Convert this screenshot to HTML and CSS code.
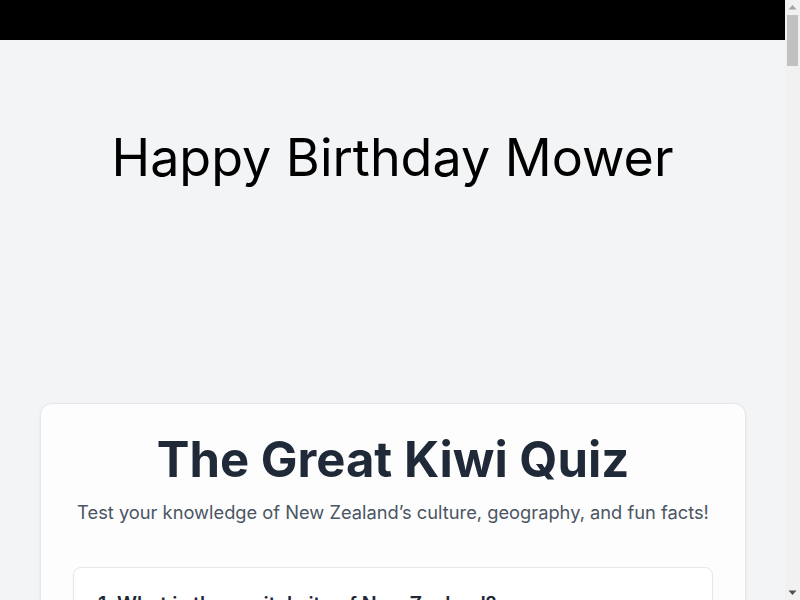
FILE: index.html
```html
<!DOCTYPE html>
<html lang="en">
<head>
<meta charset="utf-8">
<title>The Great Kiwi Quiz</title>
<link rel="stylesheet" href="styles.css">
</head>
<body>
<div class="topbar"></div>
<header class="hero">
  <h1 class="hero-title">Happy Birthday Mower</h1>
</header>
<main class="wrap">
  <section class="quiz-card">
    <h2 class="quiz-title">The Great Kiwi Quiz</h2>
    <p class="quiz-sub">Test your knowledge of New Zealand’s culture, geography, and fun facts!</p>
    <div class="questions">
      <div class="q">
        <p class="q-text">1. What is the capital city of New Zealand?</p>
        <div class="opts">
          <label class="opt"><span class="radio"></span>Auckland</label>
          <label class="opt"><span class="radio"></span>Wellington</label>
          <label class="opt"><span class="radio"></span>Christchurch</label>
          <label class="opt"><span class="radio"></span>Queenstown</label>
        </div>
      </div>
      <div class="q">
        <p class="q-text">2. What is the Māori name for New Zealand?</p>
        <div class="opts">
          <label class="opt"><span class="radio"></span>Aotearoa</label>
          <label class="opt"><span class="radio"></span>Te Waipounamu</label>
          <label class="opt"><span class="radio"></span>Rangitoto</label>
          <label class="opt"><span class="radio"></span>Whakaari</label>
        </div>
      </div>
      <div class="q">
        <p class="q-text">3. Which flightless bird is a national symbol?</p>
        <div class="opts">
          <label class="opt"><span class="radio"></span>Kea</label>
          <label class="opt"><span class="radio"></span>Kiwi</label>
          <label class="opt"><span class="radio"></span>Tūī</label>
          <label class="opt"><span class="radio"></span>Pūkeko</label>
        </div>
      </div>
      <div class="q">
        <p class="q-text">4. What is the highest mountain in New Zealand?</p>
        <div class="opts">
          <label class="opt"><span class="radio"></span>Mount Ruapehu</label>
          <label class="opt"><span class="radio"></span>Mount Taranaki</label>
          <label class="opt"><span class="radio"></span>Aoraki / Mount Cook</label>
          <label class="opt"><span class="radio"></span>Mount Tasman</label>
        </div>
      </div>
      <div class="q">
        <p class="q-text">5. What is a "jandal"?</p>
        <div class="opts">
          <label class="opt"><span class="radio"></span>A type of pie</label>
          <label class="opt"><span class="radio"></span>A flip-flop sandal</label>
          <label class="opt"><span class="radio"></span>A rugby move</label>
          <label class="opt"><span class="radio"></span>A small boat</label>
        </div>
      </div>
      <div class="q">
        <p class="q-text">6. What is the name of the national rugby team?</p>
        <div class="opts">
          <label class="opt"><span class="radio"></span>The Wallabies</label>
          <label class="opt"><span class="radio"></span>The Springboks</label>
          <label class="opt"><span class="radio"></span>The All Blacks</label>
          <label class="opt"><span class="radio"></span>The Black Caps</label>
        </div>
      </div>
      <div class="q">
        <p class="q-text">7. Which dessert do Kiwis claim as their own?</p>
        <div class="opts">
          <label class="opt"><span class="radio"></span>Lamington</label>
          <label class="opt"><span class="radio"></span>Pavlova</label>
          <label class="opt"><span class="radio"></span>Tiramisu</label>
          <label class="opt"><span class="radio"></span>Trifle</label>
        </div>
      </div>
      <div class="q">
        <p class="q-text">8. Which city is known as the "City of Sails"?</p>
        <div class="opts">
          <label class="opt"><span class="radio"></span>Auckland</label>
          <label class="opt"><span class="radio"></span>Napier</label>
          <label class="opt"><span class="radio"></span>Dunedin</label>
          <label class="opt"><span class="radio"></span>Nelson</label>
        </div>
      </div>
      <div class="q">
        <p class="q-text">9. What flavour of ice cream is a Kiwi classic?</p>
        <div class="opts">
          <label class="opt"><span class="radio"></span>Rocky Road</label>
          <label class="opt"><span class="radio"></span>Hokey Pokey</label>
          <label class="opt"><span class="radio"></span>Mint Choc Chip</label>
          <label class="opt"><span class="radio"></span>Cookies and Cream</label>
        </div>
      </div>
      <div class="q">
        <p class="q-text">10. Which film trilogy was shot in New Zealand?</p>
        <div class="opts">
          <label class="opt"><span class="radio"></span>Star Wars</label>
          <label class="opt"><span class="radio"></span>The Lord of the Rings</label>
          <label class="opt"><span class="radio"></span>The Matrix</label>
          <label class="opt"><span class="radio"></span>Back to the Future</label>
        </div>
      </div>
      <div class="q">
        <p class="q-text">11. What does "sweet as" mean?</p>
        <div class="opts">
          <label class="opt"><span class="radio"></span>Very sugary</label>
          <label class="opt"><span class="radio"></span>No problem / great</label>
          <label class="opt"><span class="radio"></span>Goodbye</label>
          <label class="opt"><span class="radio"></span>Be careful</label>
        </div>
      </div>
      <div class="q">
        <p class="q-text">12. Which sea lies between New Zealand and Australia?</p>
        <div class="opts">
          <label class="opt"><span class="radio"></span>Coral Sea</label>
          <label class="opt"><span class="radio"></span>Tasman Sea</label>
          <label class="opt"><span class="radio"></span>Ross Sea</label>
          <label class="opt"><span class="radio"></span>Arafura Sea</label>
        </div>
      </div>
      <div class="q">
        <p class="q-text">13. What is the largest city in New Zealand?</p>
        <div class="opts">
          <label class="opt"><span class="radio"></span>Wellington</label>
          <label class="opt"><span class="radio"></span>Hamilton</label>
          <label class="opt"><span class="radio"></span>Auckland</label>
          <label class="opt"><span class="radio"></span>Tauranga</label>
        </div>
      </div>
      <div class="q">
        <p class="q-text">14. What is a "chilly bin"?</p>
        <div class="opts">
          <label class="opt"><span class="radio"></span>A freezer</label>
          <label class="opt"><span class="radio"></span>A portable cooler</label>
          <label class="opt"><span class="radio"></span>A rubbish bin</label>
          <label class="opt"><span class="radio"></span>A winter jacket</label>
        </div>
      </div>
      <div class="q">
        <p class="q-text">15. How many main islands make up New Zealand?</p>
        <div class="opts">
          <label class="opt"><span class="radio"></span>One</label>
          <label class="opt"><span class="radio"></span>Two</label>
          <label class="opt"><span class="radio"></span>Three</label>
          <label class="opt"><span class="radio"></span>Four</label>
        </div>
      </div>
    </div>
    <div class="actions">
      <button class="submit" type="button">Submit Answers</button>
    </div>
  </section>
</main>
<div class="scrollbar" aria-hidden="true">
  <div class="sb-btn">
    <svg width="15" height="15" viewBox="0 0 15 15"><polygon points="3.5,9.5 11.5,9.5 7.5,5" fill="#a3a3a3"/></svg>
  </div>
  <div class="sb-track"><div class="sb-thumb"></div></div>
  <div class="sb-btn">
    <svg width="15" height="15" viewBox="0 0 15 15"><polygon points="3.5,5.5 11.5,5.5 7.5,10" fill="#505050"/></svg>
  </div>
</div>
</body>
</html>
```

FILE: styles.css
```css
* { box-sizing: border-box; }
html, body { margin: 0; padding: 0; }
body {
  background: #f3f4f6;
  font-family: Inter, "Noto Sans", sans-serif;
  color: #111827;
  margin-right: 15px;
}
.topbar {
  height: 40px;
  background: #000;
}
.hero {
  padding: 82px 16px 0;
  height: 363px;
  text-align: center;
}
.hero-title {
  margin: 0;
  font-size: 52px;
  font-weight: 400;
  line-height: 72px;
  color: #000;
}
.wrap {
  padding: 0 39px 64px 40px;
}
.quiz-card {
  background: #fdfdfd;
  border: 1px solid #e5e7eb;
  border-radius: 12px;
  box-shadow: 0 1px 3px rgba(0,0,0,0.06);
  padding: 24px 32px 32px;
}
.quiz-title {
  margin: 0;
  text-align: center;
  font-size: 49px;
  font-weight: 700;
  line-height: 64px;
  color: #1f2937;
}
.quiz-sub {
  margin: 6px 0 0;
  text-align: center;
  font-size: 18.3px;
  line-height: 28px;
  color: #4b5563;
}
.questions {
  margin-top: 41px;
  display: flex;
  flex-direction: column;
  gap: 24px;
}
.q {
  background: #fff;
  border: 1px solid #e5e7eb;
  border-radius: 8px;
  box-shadow: 0 1px 2px rgba(0,0,0,0.04);
  padding: 22px 24px 24px;
}
.q-text {
  margin: 0 0 16px;
  font-size: 19.6px;
  line-height: 28px;
  font-weight: 600;
  color: #1f2937;
}
.opts {
  display: flex;
  flex-direction: column;
  gap: 12px;
}
.opt {
  display: flex;
  align-items: center;
  gap: 12px;
  padding: 12px 16px;
  border: 1px solid #d1d5db;
  border-radius: 8px;
  font-size: 16px;
  color: #374151;
}
.radio {
  width: 16px;
  height: 16px;
  border: 1px solid #9ca3af;
  border-radius: 50%;
  background: #fff;
}
.actions {
  margin-top: 32px;
  display: flex;
  justify-content: center;
}
.submit {
  font-family: inherit;
  font-size: 18px;
  font-weight: 600;
  color: #fff;
  background: #2563eb;
  border: 0;
  border-radius: 8px;
  padding: 12px 32px;
}

/* classic scrollbar drawn over the right edge */
.scrollbar {
  position: fixed;
  top: 0;
  right: 0;
  width: 15px;
  height: 100vh;
  background: #f1f1f1;
  display: flex;
  flex-direction: column;
}
.sb-btn {
  height: 15px;
  flex: none;
}
.sb-btn svg { display: block; }
.sb-track {
  flex: 1;
  padding: 0 2px;
}
.sb-thumb {
  height: 51px;
  background: #c1c1c1;
}
```
